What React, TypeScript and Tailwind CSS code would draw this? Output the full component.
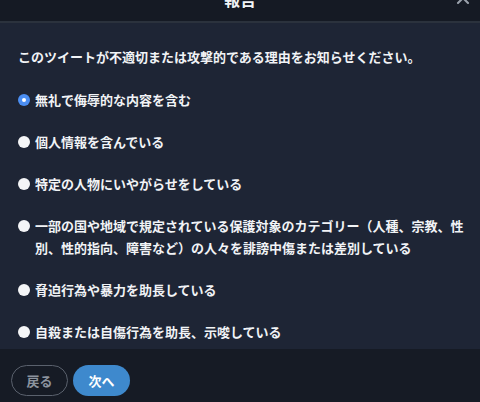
import { X } from 'lucide-react';

const reasons = [
  '無礼で侮辱的な内容を含む',
  '個人情報を含んでいる',
  '特定の人物にいやがらせをしている',
  '一部の国や地域で規定されている保護対象のカテゴリー（人種、宗教、性別、性的指向、障害など）の人々を誹謗中傷または差別している',
  '脅迫行為や暴力を助長している',
  '自殺または自傷行為を助長、示唆している',
];

function Radio({ checked }: { checked: boolean }) {
  if (checked) {
    return (
      <span className="mt-[5px] flex h-[12px] w-[12px] shrink-0 items-center justify-center rounded-full bg-[#4b8ef2]">
        <span className="h-[4px] w-[4px] rounded-full bg-white" />
      </span>
    );
  }
  return <span className="mt-[5px] h-[12px] w-[12px] shrink-0 rounded-full bg-[#f4f5f7]" />;
}

export default function App() {
  const selected = 0;

  return (
    <div className="h-[402px] w-[480px] overflow-hidden bg-[#1e2535] font-['Noto_Sans_CJK_JP',sans-serif] font-bold text-[#f1f3f6]">
      <div className="relative h-[23px] overflow-hidden border-b-2 border-[#2b323d] bg-[#151a24]">
        <div className="mt-[-9px] text-center text-[16px] leading-none">報告</div>
        <X className="absolute right-[7px] top-[-12px] text-[#9aa1ab]" size={20} strokeWidth={2.5} />
      </div>

      <div className="h-[326px] overflow-hidden pl-[18px] pr-[12px] pt-[24px]">
        <p className="text-[13px] leading-[20px]">このツイートが不適切または攻撃的である理由をお知らせください。</p>
        <ul className="mt-[22px] flex flex-col gap-[20px]">
          {reasons.map((r, i) => (
            <li key={r} className="flex items-start gap-[5px]">
              <Radio checked={i === selected} />
              <span className="text-[13px] leading-[22px]">{r}</span>
            </li>
          ))}
        </ul>
      </div>

      <div className="flex h-[53px] gap-[5px] bg-[#161b25] px-[11px] pt-[16px]">
        <button className="h-[31px] w-[57px] rounded-full border border-[#5a616d] text-[13px] text-[#8c939e]">
          戻る
        </button>
        <button className="h-[31px] w-[57px] rounded-full bg-[#3e89cd] text-[13px] text-white">
          次へ
        </button>
      </div>
    </div>
  );
}
